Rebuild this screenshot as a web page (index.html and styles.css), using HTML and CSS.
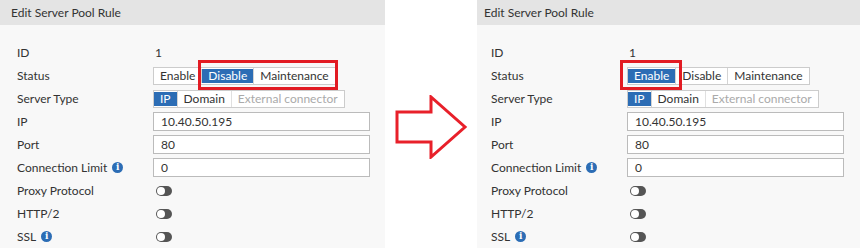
FILE: index.html
```html
<!DOCTYPE html>
<html lang="en">
<head>
    <meta charset="UTF-8">
    <title>Edit Server Pool Rule</title>
    <link rel="stylesheet" href="styles.css">
</head>
<body>
    <div class="panel panel-left">
        <div class="panel-head">Edit Server Pool Rule</div>
        <div class="panel-body">
            <div class="row"><span class="label">ID</span><span class="value">1</span></div>
            <div class="row">
                <span class="label">Status</span>
                <div class="group">
                    <span class="btn">Enable</span><span class="btn active">Disable</span><span class="btn">Maintenance</span>
                    <div class="mark mark-disable"></div>
                </div>
            </div>
            <div class="row">
                <span class="label">Server Type</span>
                <div class="group">
                    <span class="btn active">IP</span><span class="btn">Domain</span><span class="btn muted">External connector</span>
                </div>
            </div>
            <div class="row"><span class="label">IP</span><div class="input">10.40.50.195</div></div>
            <div class="row"><span class="label">Port</span><div class="input">80</div></div>
            <div class="row"><span class="label">Connection Limit <i class="info">i</i></span><div class="input">0</div></div>
            <div class="row"><span class="label">Proxy Protocol</span><span class="toggle"></span></div>
            <div class="row"><span class="label">HTTP/2</span><span class="toggle"></span></div>
            <div class="row"><span class="label">SSL <i class="info">i</i></span><span class="toggle"></span></div>
        </div>
    </div>

    <div class="arrow">
        <svg width="74" height="64" viewBox="0 0 74 64">
            <path d="M2 17 H36 V2 L70 32 L36 62 V47 H2 Z" fill="none" stroke="#e8202a" stroke-width="3" stroke-linejoin="miter"/>
        </svg>
    </div>

    <div class="panel panel-right">
        <div class="panel-head">Edit Server Pool Rule</div>
        <div class="panel-body">
            <div class="row"><span class="label">ID</span><span class="value">1</span></div>
            <div class="row">
                <span class="label">Status</span>
                <div class="group">
                    <span class="btn active">Enable</span><span class="btn">Disable</span><span class="btn">Maintenance</span>
                    <div class="mark mark-enable"></div>
                </div>
            </div>
            <div class="row">
                <span class="label">Server Type</span>
                <div class="group">
                    <span class="btn active">IP</span><span class="btn">Domain</span><span class="btn muted">External connector</span>
                </div>
            </div>
            <div class="row"><span class="label">IP</span><div class="input">10.40.50.195</div></div>
            <div class="row"><span class="label">Port</span><div class="input">80</div></div>
            <div class="row"><span class="label">Connection Limit <i class="info">i</i></span><div class="input">0</div></div>
            <div class="row"><span class="label">Proxy Protocol</span><span class="toggle"></span></div>
            <div class="row"><span class="label">HTTP/2</span><span class="toggle"></span></div>
            <div class="row"><span class="label">SSL <i class="info">i</i></span><span class="toggle"></span></div>
        </div>
    </div>
</body>
</html>
```

FILE: styles.css
```css
body {
    margin: 0;
    width: 860px;
    height: 250px;
    overflow: hidden;
    display: flex;
    background: #fff;
    font-family: 'Lato', 'Liberation Sans', sans-serif;
    font-size: 12px;
    color: #333;
}

.panel {
    background: #f8f8f8;
    height: 248px;
}

.panel-left {
    width: 385px;
}

.panel-right {
    width: 383px;
}

.panel-head {
    height: 25px;
    line-height: 25px;
    background: #e4e4e4;
    padding-left: 11px;
}

.panel-right .panel-head {
    padding-left: 7px;
}

.panel-body {
    padding: 16px 0 0 17px;
}

.panel-right .panel-body {
    padding-left: 14px;
}

.row {
    display: flex;
    align-items: center;
    height: 23px;
}

.label {
    width: 136px;
    flex: none;
    display: flex;
    align-items: center;
    gap: 5px;
}

.value {
    padding-left: 2px;
}

.group {
    position: relative;
    display: flex;
    height: 18px;
    background: #fff;
    border: 1px solid #ccc;
    box-sizing: border-box;
}

.btn {
    padding: 0 6px;
    line-height: 16px;
    border-left: 1px solid #d4d4d4;
    white-space: nowrap;
}

.btn:first-child {
    border-left: none;
}

.btn.active {
    background: #2c6db5;
    color: #fff;
    margin: 1px 0;
    line-height: 14px;
}

.btn.muted {
    color: #aaa;
    border-left-color: #e0e0e0;
}

.mark {
    position: absolute;
    top: -8px;
    height: 24px;
    border: 3px solid #e21b23;
}

.mark-disable {
    left: 44px;
    width: 134px;
}

.mark-enable {
    left: -8px;
    width: 56px;
}

.input {
    width: 217px;
    height: 19px;
    box-sizing: border-box;
    background: #fff;
    border: 1px solid #bbb;
    padding-left: 7px;
    line-height: 17px;
}

.info {
    display: inline-block;
    width: 11px;
    height: 11px;
    border-radius: 50%;
    background: #2c6db5;
    color: #fff;
    font-style: normal;
    font-weight: bold;
    font-size: 9px;
    line-height: 11px;
    text-align: center;
    font-family: 'DejaVu Serif', serif;
}

.toggle {
    position: relative;
    display: inline-block;
    width: 16px;
    height: 10px;
    margin-left: 3px;
    border-radius: 5px;
    background: #555;
}

.toggle::after {
    content: "";
    position: absolute;
    left: 1px;
    top: 1px;
    width: 8px;
    height: 8px;
    border-radius: 50%;
    background: #fff;
}

.arrow {
    width: 92px;
    flex: none;
    padding: 95px 0 0 10px;
    box-sizing: border-box;
}
```
